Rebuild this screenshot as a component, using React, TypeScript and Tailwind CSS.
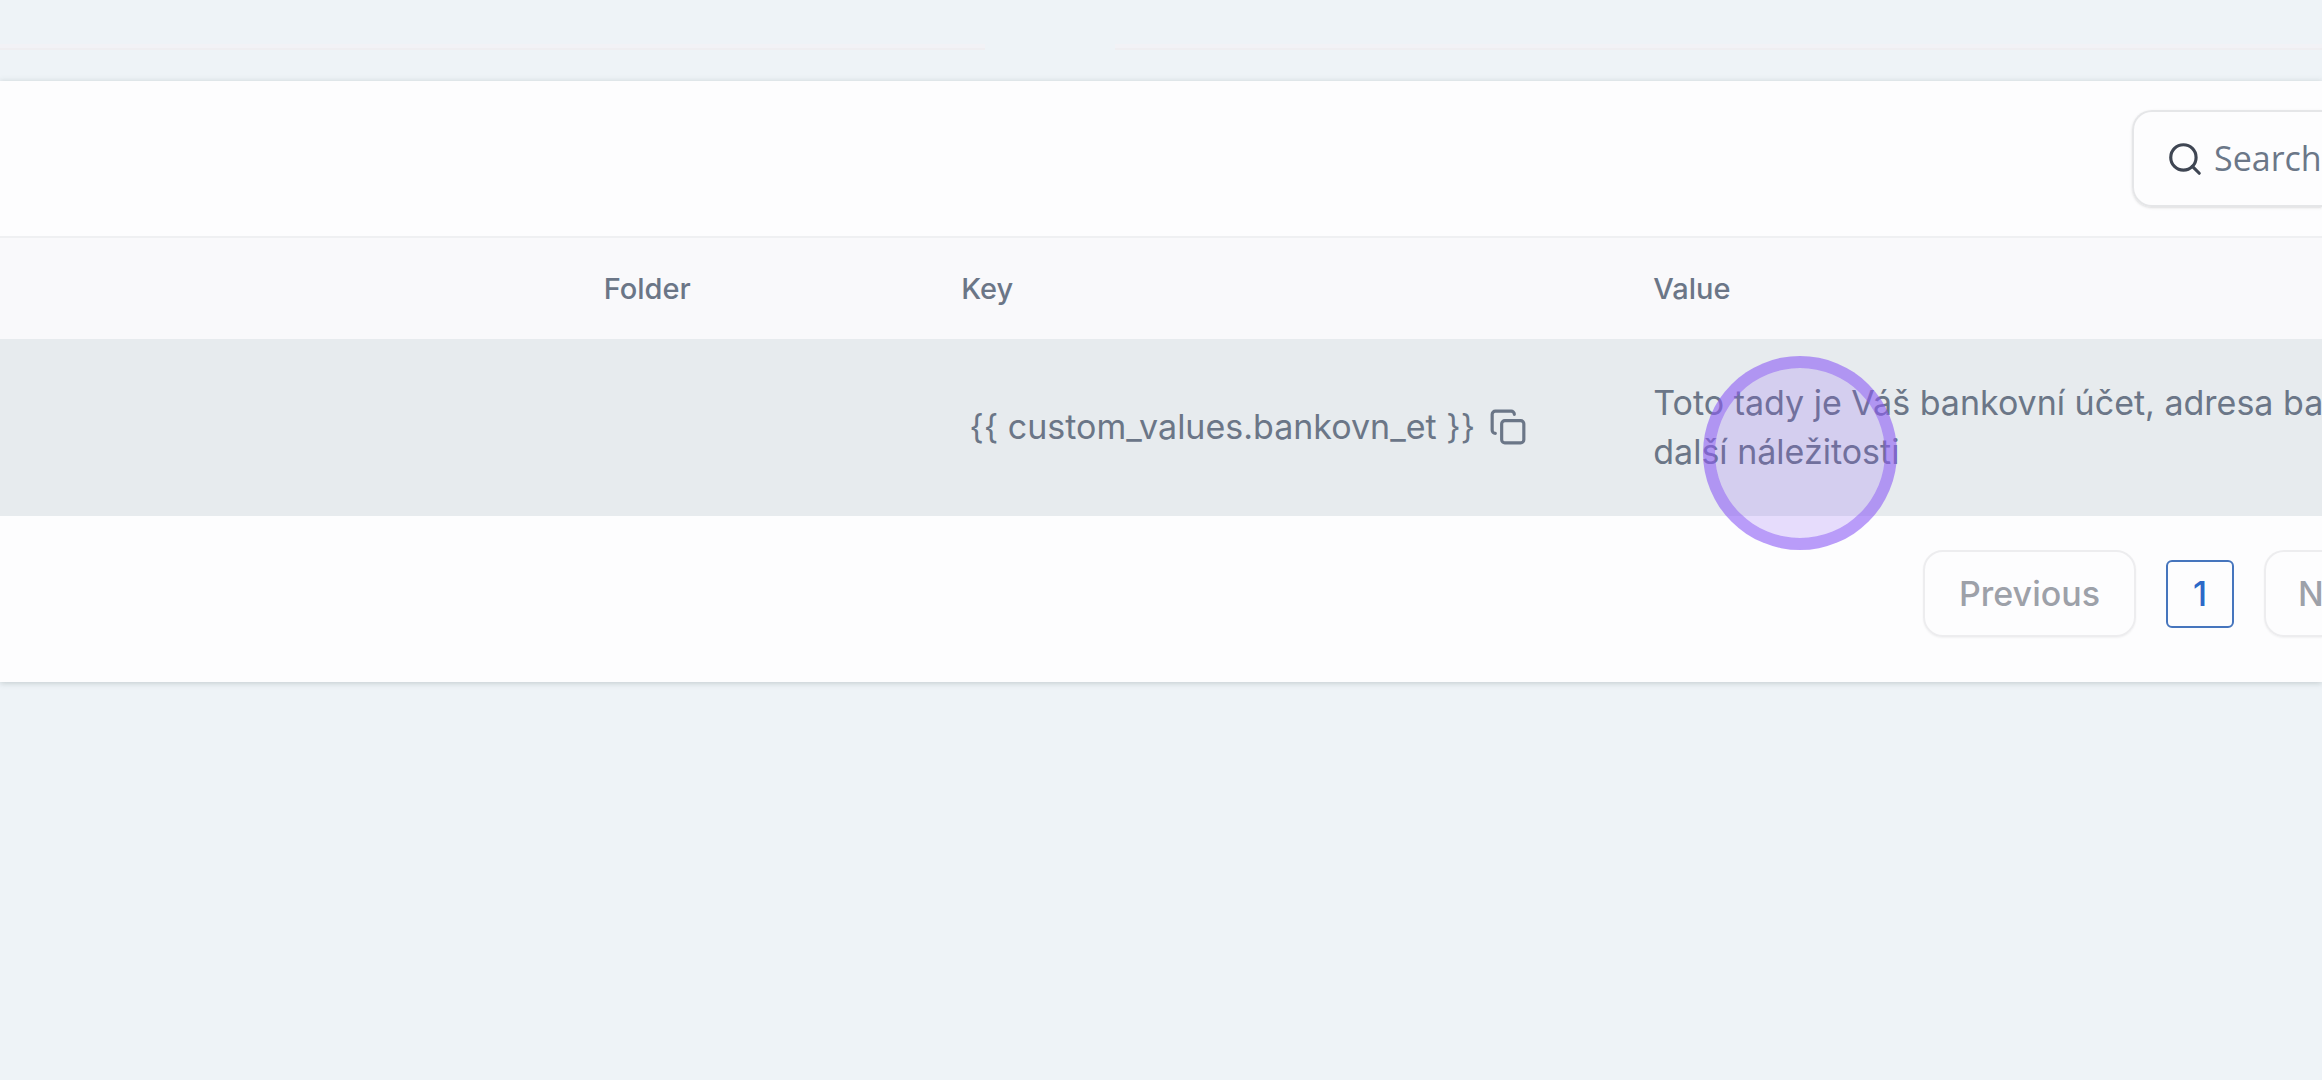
import { Copy, Search } from "lucide-react";

function SearchBox() {
  return (
    <label className="flex h-[97px] w-[190px] items-center gap-2.5 rounded-l-[20px] border-2 border-r-0 border-[#e5e6e8] pl-8 shadow-sm">
      <Search className="size-[38px] shrink-0 text-[#3f4653]" strokeWidth={2} aria-hidden />
      <input
        type="text"
        placeholder="Search"
        aria-label="Search"
        className="w-full min-w-0 bg-transparent font-['Open_Sans',sans-serif] text-[34px] text-[#6b7788] outline-none placeholder:text-[#6b7788]"
      />
    </label>
  );
}

function ValuesTable() {
  return (
    <table className="w-full table-fixed border-collapse text-left">
      <colgroup>
        <col className="w-[26%]" />
        <col className="w-[15.4%]" />
        <col className="w-[29.8%]" />
        <col />
      </colgroup>
      <thead>
        <tr className="h-[102px] border-t-2 border-[#eff0f2] bg-[#f9f9fb] text-[29px] text-[#6b7687]">
          <td />
          <th scope="col" className="font-medium">Folder</th>
          <th scope="col" className="font-medium">Key</th>
          <th scope="col" className="font-medium">Value</th>
        </tr>
      </thead>
      <tbody>
        <tr className="h-[177px] bg-[#e7ebee] text-[34px] leading-[49px] text-[#6b7687]">
          <td />
          <td />
          <td className="pb-0.5 pl-2">
            <div className="flex items-center gap-3.5 whitespace-nowrap">
              <span>{"{{ custom_values.bankovn_et }}"}</span>
              <button type="button" aria-label="Copy key">
                <Copy className="size-[38px]" strokeWidth={2} />
              </button>
            </div>
          </td>
          <td className="pb-0.5 whitespace-nowrap">
            Toto tady je Váš bankovní účet, adresa ban
            <br />
            další náležitosti
          </td>
        </tr>
      </tbody>
    </table>
  );
}

function Pagination() {
  return (
    <nav aria-label="Pagination" className="flex items-center justify-end gap-[30px] pt-[34px] pb-[45px] text-[34px] font-medium">
      <button type="button" className="h-[87px] w-[213px] rounded-[20px] border-2 border-[#ededef] text-[#9da1a9] shadow-xs">
        Previous
      </button>
      <button type="button" aria-current="page" className="size-[68px] rounded-md border-2 border-[#4675bd] text-[#2c69c8]">
        1
      </button>
      <button type="button" className="h-[87px] w-[58px] rounded-l-[20px] border-2 border-r-0 border-[#ededef] pl-8 text-left text-[#9da1a9] shadow-xs">
        Next
      </button>
    </nav>
  );
}

export default function App() {
  return (
    <div className="relative min-h-screen overflow-hidden bg-[#eef3f7] font-['Inter',sans-serif]">
      <div className="flex h-[81px] items-end justify-between pb-[31px]">
        <div className="h-1.5 w-[42.4%] border-b-2 border-[#efeef1] bg-[#f2f2f6]" />
        <div className="h-1.5 w-[52%] border-b-2 border-[#efeef1] bg-[#f2f2f6]" />
      </div>
      <main className="bg-[#fdfdfe] shadow-[0_1px_6px_rgba(60,80,80,0.25)]">
        <div className="flex justify-end pt-[29px] pb-[29px]">
          <SearchBox />
        </div>
        <ValuesTable />
        <Pagination />
      </main>
      <div className="pointer-events-none absolute top-[356px] left-[1703px] size-[194px] rounded-full border-12 border-[#8b5cf6]/50 bg-[#8b5cf6]/20" />
    </div>
  );
}
